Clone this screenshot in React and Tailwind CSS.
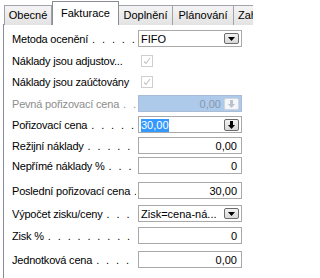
import React from "react";

const font = { fontFamily: '"Liberation Sans", Arial, sans-serif' };

const Tab = ({ children, w, active, border }) =>
  active ? (
    <div
      className={`${w} shrink-0 relative z-10 h-[24px] bg-white border-l border-r border-t border-[#898c95] flex items-center justify-center pb-[1px]`}
    >
      {children}
    </div>
  ) : (
    <div
      className={`${w} ${border} shrink-0 h-[20px] bg-gradient-to-b from-[#f4f4f4] to-[#e3e3e3] border-t border-[#a0a3aa] flex items-center overflow-hidden whitespace-nowrap`}
    >
      {children}
    </div>
  );

const DropBtn = () => (
  <div className="w-[15px] h-[11px] rounded-[2px] border border-[#6b6b6b] bg-gradient-to-b from-[#f2f2f2] to-[#d8d8d8] flex items-center justify-center">
    <svg width="7" height="4" viewBox="0 0 7 4">
      <path d="M0 0h7L3.5 4z" fill="#000" />
    </svg>
  </div>
);

const LookupBtn = ({ disabled }) => (
  <div
    className={`w-[15px] h-[12px] rounded-[2px] border flex items-center justify-center ${
      disabled
        ? "border-[#d0d6de] bg-[#f4f6f9]"
        : "border-[#6b6b6b] bg-gradient-to-b from-[#f2f2f2] to-[#d8d8d8]"
    }`}
  >
    <svg width="7" height="8" viewBox="0 0 7 8">
      <path
        d="M2 0h3v4h2L3.5 8 0 4h2z"
        fill={disabled ? "#b9c2cf" : "#000"}
      />
    </svg>
  </div>
);

const Check = () => (
  <div className="ml-[3px] w-[12px] h-[12px] border border-[#cfcfcf] bg-white flex items-center justify-center">
    <svg width="8" height="8" viewBox="0 0 8 8">
      <path d="M1 4.5l2 2L7 1" fill="none" stroke="#c2c2c2" strokeWidth="1.1" />
    </svg>
  </div>
);

const Row = ({ label, dots, mt, disabled, children }) => (
  <div className={`flex items-center h-[17px] ${mt}`}>
    <div
      className={`w-[124px] shrink-0 flex overflow-hidden whitespace-nowrap pt-[2px] tracking-[-0.2px] ${
        disabled ? "text-[#8d8d8d]" : "text-black"
      }`}
    >
      <span className="shrink-0">{label}</span>
      {dots && (
        <span className="pl-[4px] overflow-hidden tracking-[1.9px]">
          {". . . . . . . . . . . . . . . . . ."}
        </span>
      )}
    </div>
    <div className="ml-[2px] shrink-0">{children}</div>
  </div>
);

const Box = ({ children }) => (
  <div className="w-[104px] h-[17px] border border-[#a9a9a9] bg-white flex items-center justify-end pr-[4px] pt-[2px]">
    {children}
  </div>
);

export default function App() {
  return (
    <div
      className="w-[253px] h-[278px] overflow-hidden bg-white text-[11px] text-black"
      style={font}
    >
      {/* Tabs */}
      <div className="flex items-end h-[25px] pl-[4px] w-[320px]">
        <Tab w="w-[48px] justify-center" border="border-l border-r">
          Obecné
        </Tab>
        <Tab w="w-[67px]" active>
          Fakturace
        </Tab>
        <Tab w="w-[54px] justify-center" border="border-r">
          Doplnění
        </Tab>
        <Tab w="w-[61px] justify-center" border="border-r">
          Plánování
        </Tab>
        <Tab w="w-[60px] pl-[4px]" border="border-r">
          Zahraničí
        </Tab>
      </div>

      {/* Panel */}
      <div className="ml-[3px] -mt-px w-[300px] h-[260px] border-l border-t border-[#898c95] pl-[8px] pt-[5px]">
        <Row label="Metoda ocenění" dots>
          <div className="w-[104px] h-[17px] border border-[#a9a9a9] bg-white flex items-center justify-between pl-[2px] pr-[2px]">
            <span className="pt-[2px]">FIFO</span>
            <DropBtn />
          </div>
        </Row>

        <Row label="Náklady jsou adjustov..." mt="mt-[5px]">
          <Check />
        </Row>

        <Row label="Náklady jsou zaúčtovány" mt="mt-[4px]">
          <Check />
        </Row>

        <Row label="Pevná pořizovací cena" dots disabled mt="mt-[5px]">
          <div className="w-[104px] h-[17px] border border-[#a9bdd6] bg-[#aecaea] flex items-center justify-end pr-[2px] gap-[3px]">
            <span className="pt-[2px] text-[#8797ae]">0,00</span>
            <LookupBtn disabled />
          </div>
        </Row>

        <Row label="Pořizovací cena" dots mt="mt-[4px]">
          <div className="w-[104px] h-[17px] border border-[#a9a9a9] bg-white flex items-center justify-between pl-[2px] pr-[2px]">
            <span className="bg-[#3399ff] text-white leading-[13px] mt-[1px]">30,00</span>
            <LookupBtn />
          </div>
        </Row>

        <Row label="Režijní náklady" dots mt="mt-[4px]">
          <Box>0,00</Box>
        </Row>

        <Row label="Nepřímé náklady %" dots mt="mt-[3px]">
          <Box>0</Box>
        </Row>

        <Row label="Poslední pořizovací cena" dots mt="mt-[8px]">
          <Box>30,00</Box>
        </Row>

        <Row label="Výpočet zisku/ceny" dots mt="mt-[6px]">
          <div className="w-[104px] h-[17px] border border-[#a9a9a9] bg-white flex items-center justify-between pl-[2px] pr-[2px]">
            <span className="pt-[2px] whitespace-nowrap">Zisk=cena-ná...</span>
            <DropBtn />
          </div>
        </Row>

        <Row label="Zisk %" dots mt="mt-[5px]">
          <Box>0</Box>
        </Row>

        <Row label="Jednotková cena" dots mt="mt-[7px]">
          <Box>0,00</Box>
        </Row>
      </div>
    </div>
  );
}
